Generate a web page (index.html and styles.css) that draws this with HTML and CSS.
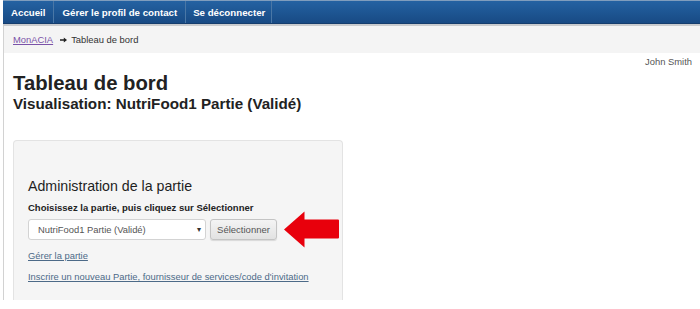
FILE: index.html
```html
<!DOCTYPE html>
<html lang="fr">
<head>
<meta charset="utf-8">
<title>Tableau de bord</title>
<link rel="stylesheet" href="styles.css">
</head>
<body>
<div class="page">
  <nav class="topnav">
    <a class="navitem" href="#">Accueil</a>
    <a class="navitem" href="#">Gérer le profil de contact</a>
    <a class="navitem last" href="#">Se déconnecter</a>
  </nav>
  <div class="navshadow"></div>
  <div class="content">
    <div class="breadcrumb">
      <a class="crumb" href="#">MonACIA</a>
      <svg class="crumbarrow" width="7" height="6" viewBox="0 0 7 6"><path d="M0 2.2 H3.8 V0.4 L7 3 L3.8 5.6 V3.8 H0 Z" fill="#222"/></svg>
      <span>Tableau de bord</span>
    </div>
    <div class="userrow">John Smith</div>
    <h1 class="title">Tableau de bord</h1>
    <h2 class="subtitle">Visualisation: NutriFood1 Partie (Validé)</h2>
    <section class="panel">
      <h3 class="paneltitle">Administration de la partie</h3>
      <div class="label">Choisissez la partie, puis cliquez sur Sélectionner</div>
      <div class="selectrow">
        <div class="select"><span>NutriFood1 Partie (Validé)</span><span class="caret">▾</span></div>
        <button class="btn">Sélectionner</button>
        <svg class="redarrow" width="55" height="37" viewBox="0 0 55 37"><path d="M0 18.5 L20.5 0.5 L20.5 8.5 L54 8.5 Q55 8.5 55 9.5 L55 26.5 Q55 27.5 54 27.5 L20.5 27.5 L20.5 36.5 Z" fill="#e8000c"/></svg>
      </div>
      <a class="plink first" href="#">Gérer la partie</a>
      <a class="plink second" href="#">Inscrire un nouveau Partie, fournisseur de services/code d'invitation</a>
    </section>
  </div>
</div>
</body>
</html>
```

FILE: styles.css
```css
html, body {
  margin: 0;
  padding: 0;
  background: #ffffff;
}
body {
  font-family: "Liberation Sans", Arial, sans-serif;
  color: #222222;
  width: 700px;
  height: 309px;
  overflow: hidden;
}
.page {
  margin-left: 3px;
}
.topnav {
  display: flex;
  height: 22px;
  border-top: 1px solid #7f9dbd;
  border-bottom: 1px solid #153d6d;
  background: linear-gradient(#2462a2, #184a84);
}
.navitem {
  display: flex;
  align-items: center;
  padding: 0 8px;
  color: #ffffff;
  font-weight: bold;
  font-size: 9.7px;
  text-decoration: none;
  border-right: 1px solid #4a77a6;
}
.navitem.last {
  padding: 0 6px 0 7px;
}
.navshadow {
  height: 2px;
  background: #c9cbce;
}
.content {
  border-left: 1px solid #d2d2d2;
  height: 274px;
}
.breadcrumb {
  display: flex;
  align-items: center;
  height: 27px;
  padding-left: 9px;
  background: #f4f4f4;
  font-size: 9.4px;
  color: #333333;
}
.crumb {
  color: #7a52a8;
  text-decoration: underline;
}
.crumbarrow {
  margin: 0 4px 0 7px;
}
.userrow {
  height: 18px;
  line-height: 18px;
  text-align: right;
  padding-right: 8px;
  font-size: 9.4px;
  color: #555555;
}
.title {
  margin: 0;
  padding-left: 9px;
  font-size: 20.3px;
  line-height: 24px;
  font-weight: bold;
  color: #222222;
}
.subtitle {
  margin: 0;
  padding-left: 9px;
  font-size: 15.2px;
  line-height: 18px;
  font-weight: bold;
  color: #222222;
}
.panel {
  margin: 27px 0 0 9px;
  width: 300px;
  height: 159px;
  padding: 0 14px;
  background: #f5f5f5;
  border: 1px solid #e3e3e3;
  border-bottom: none;
  border-radius: 4px 4px 0 0;
  display: flex;
  flex-direction: column;
  align-items: flex-start;
}
.paneltitle {
  margin: 37px 0 0 0;
  font-size: 14.2px;
  line-height: 17px;
  font-weight: normal;
  color: #1e1e1e;
}
.label {
  margin-top: 6px;
  font-size: 9.5px;
  line-height: 14px;
  font-weight: bold;
  color: #222222;
}
.selectrow {
  display: flex;
  align-items: center;
  height: 22px;
  margin-top: 3px;
}
.select {
  box-sizing: border-box;
  width: 178px;
  height: 21px;
  display: flex;
  align-items: center;
  justify-content: space-between;
  padding: 0 4px 0 9px;
  background: #ffffff;
  border: 1px solid #d3d3d3;
  border-radius: 3px;
  font-size: 9.4px;
  color: #555555;
}
.caret {
  font-size: 8px;
  color: #333333;
}
.btn {
  box-sizing: border-box;
  margin: 1px 0 0 4px;
  width: 67px;
  height: 21px;
  padding: 0;
  font-family: "Liberation Sans", Arial, sans-serif;
  font-size: 9.5px;
  color: #555555;
  background: linear-gradient(#f4f4f4, #e2e2e2);
  border: 1px solid #c4c4c4;
  border-radius: 3px;
  box-shadow: 0 1px 1px rgba(0, 0, 0, 0.12);
}
.redarrow {
  margin: -7px 0 -8px 7px;
  flex: none;
}
.plink {
  font-size: 9.4px;
  line-height: 14px;
  color: #4c6a88;
  text-decoration: underline;
}
.plink.first {
  margin-top: 9px;
}
.plink.second {
  margin-top: 7px;
}
```
